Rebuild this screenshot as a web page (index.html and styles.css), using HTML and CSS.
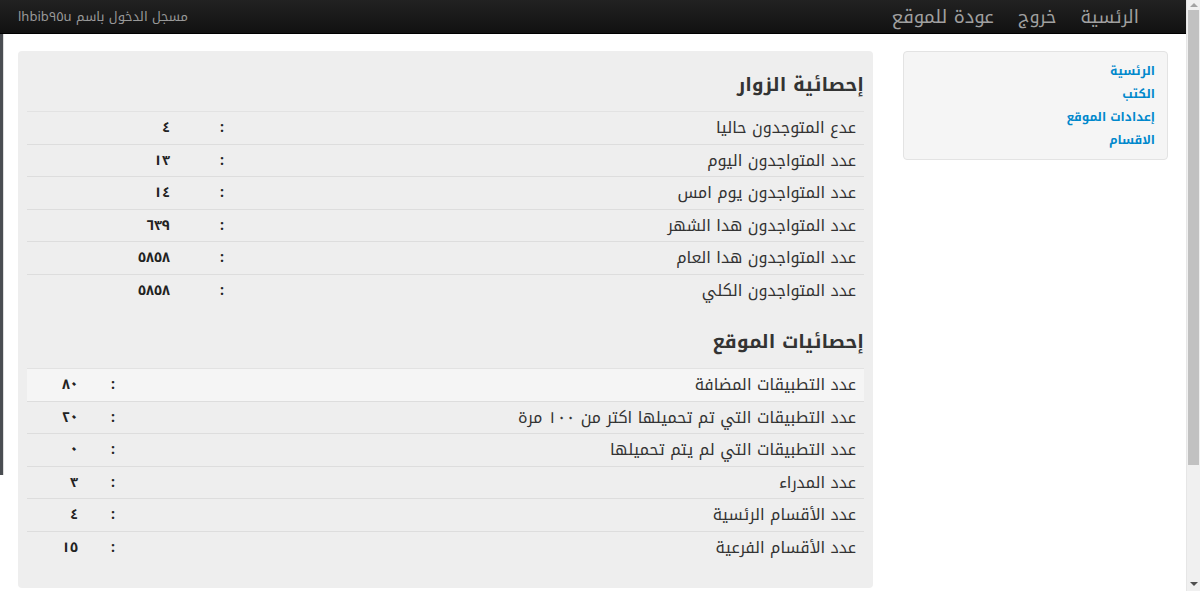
FILE: index.html
```html
<!DOCTYPE html>
<html lang="ar">
<head>
	<meta charset="UTF-8">
	<title>لوحة التحكم</title>
	<link rel="stylesheet" href="styles.css">
</head>
<body>
<div class="screen">
	<div class="page">
		<div class="navbar" dir="rtl">
			<ul class="nav">
				<li><a href="#">الرئسية</a></li>
				<li><a href="#">خروج</a></li>
				<li><a href="#">عودة للموقع</a></li>
			</ul>
			<p class="navbar-text">مسجل الدخول باسم lhbib٩٥u</p>
		</div>
		<div class="body-row">
			<div class="edge"></div>
			<div class="container" dir="rtl">
				<div class="well sidebar">
					<ul class="side-nav">
						<li><a href="#">الرئسية</a></li>
						<li><a href="#">الكتب</a></li>
						<li><a href="#">إعدادات الموقع</a></li>
						<li><a href="#">الاقسام</a></li>
					</ul>
				</div>
				<div class="well content">
					<h2>إحصائية الزوار</h2>
					<table class="table t-visitors">
						<colgroup><col><col class="c-colon"><col class="c-val"></colgroup>
						<tr><td>عدع المتوجدون حاليا</td><td class="colon">:</td><td class="val">٤</td></tr>
						<tr><td>عدد المتواجدون اليوم</td><td class="colon">:</td><td class="val">١٣</td></tr>
						<tr><td>عدد المتواجدون يوم امس</td><td class="colon">:</td><td class="val">١٤</td></tr>
						<tr><td>عدد المتواجدون هدا الشهر</td><td class="colon">:</td><td class="val">٦٣٩</td></tr>
						<tr><td>عدد المتواجدون هدا العام</td><td class="colon">:</td><td class="val">٥٨٥٨</td></tr>
						<tr><td>عدد المتواجدون الكلي</td><td class="colon">:</td><td class="val">٥٨٥٨</td></tr>
					</table>
					<h2>إحصائيات الموقع</h2>
					<table class="table t-site">
						<colgroup><col><col class="c-colon"><col class="c-val"></colgroup>
						<tr class="hover"><td>عدد التطبيقات المضافة</td><td class="colon">:</td><td class="val">٨٠</td></tr>
						<tr><td>عدد التطبيقات التي تم تحميلها اكتر من ١٠٠ مرة</td><td class="colon">:</td><td class="val">٢٠</td></tr>
						<tr><td>عدد التطبيقات التي لم يتم تحميلها</td><td class="colon">:</td><td class="val">٠</td></tr>
						<tr><td>عدد المدراء</td><td class="colon">:</td><td class="val">٣</td></tr>
						<tr><td>عدد الأقسام الرئسية</td><td class="colon">:</td><td class="val">٤</td></tr>
						<tr><td>عدد الأقسام الفرعية</td><td class="colon">:</td><td class="val">١٥</td></tr>
					</table>
				</div>
			</div>
		</div>
	</div>
	<div class="scrollbar">
		<div class="arrow up"></div>
		<div class="track"><div class="thumb"></div></div>
		<div class="arrow down"></div>
	</div>
</div>
</body>
</html>
```

FILE: styles.css
```css
body {
	margin: 0;
	font-family: "Noto Kufi Arabic", "Noto Sans Arabic", "DejaVu Sans", sans-serif;
	color: #333;
	background-color: #fff;
}

a {
	text-decoration: none;
}

.screen {
	display: flex;
	height: 591px;
	overflow: hidden;
}

.page {
	flex: 1;
	display: flex;
	flex-direction: column;
}

/* top bar */
.navbar {
	height: 34px;
	display: flex;
	align-items: center;
	justify-content: space-between;
	padding: 0 35px 0 18px;
	background-image: linear-gradient(to bottom, #222, #111);
	border-bottom: 1px solid #000;
	box-sizing: border-box;
}

.nav {
	display: flex;
	margin: 0;
	padding: 0;
	list-style: none;
}

.nav a {
	display: block;
	padding: 0 12px;
	font-size: 18px;
	line-height: 34px;
	color: #a0a0a0;
}

.nav li:last-child a {
	font-size: 18.5px;
}

.navbar-text {
	margin: 0;
	font-size: 13px;
	color: #999;
}

.body-row {
	display: flex;
	align-items: flex-start;
}

.edge {
	width: 3px;
	height: 441px;
	background-color: #4a4d52;
	border-right: 1px solid #ddd;
}

.container {
	flex: 1;
	display: flex;
	align-items: flex-start;
	gap: 30px;
	padding: 17px 18px 0 14px;
}

.well {
	background-color: #eee;
	border-radius: 4px;
	box-sizing: border-box;
}

.sidebar {
	width: 265px;
	padding: 8px 12px 7px;
	background-color: #f5f5f5;
	border: 1px solid #e3e3e3;
}

.side-nav {
	margin: 0;
	padding: 0;
	list-style: none;
}

.side-nav a {
	display: block;
	font-size: 12px;
	font-weight: bold;
	line-height: 23px;
	color: #0088cc;
}

.content {
	width: 855px;
	padding: 9px 9px 4px;
}

h2 {
	margin: 10px 0 11px;
	font-size: 19px;
	line-height: 30px;
	color: #333;
}

.table {
	width: 100%;
	border-collapse: collapse;
	table-layout: fixed;
	margin-bottom: 21px;
	font-size: 16px;
}

.table td {
	padding: 8px;
	height: 15.5px;
	line-height: 15.5px;
	border-top: 1px solid #ddd;
	text-align: right;
	white-space: nowrap;
}

.table tr:first-child td {
	border-top-color: #e2e2e2;
}

.table tr.hover td {
	background-color: #f5f5f5;
}

.table .colon,
.table .val {
	font-size: 14px;
	font-weight: bold;
	color: #222;
}

.t-visitors .c-colon { width: 54px; }
.t-visitors .c-val { width: 151px; }
.t-site .c-colon { width: 37px; }
.t-site .c-val { width: 59px; }

/* fake window scrollbar */
.scrollbar {
	width: 14px;
	display: flex;
	flex-direction: column;
	background-color: #f0f0f0;
	border-left: 1px solid #e6e6e6;
	box-sizing: border-box;
}

.arrow {
	height: 10px;
	display: flex;
	align-items: center;
	justify-content: center;
}

.arrow.up::before {
	content: "";
	border: 4px solid transparent;
	border-bottom-color: #a3a3a3;
	border-top-width: 0;
}

.arrow.down {
	height: 14px;
}

.arrow.down::before {
	content: "";
	border: 4px solid transparent;
	border-top-color: #505050;
	border-bottom-width: 0;
}

.track {
	flex: 1;
	padding: 0 1px;
}

.thumb {
	height: 455px;
	background-color: #c1c1c1;
}
```
